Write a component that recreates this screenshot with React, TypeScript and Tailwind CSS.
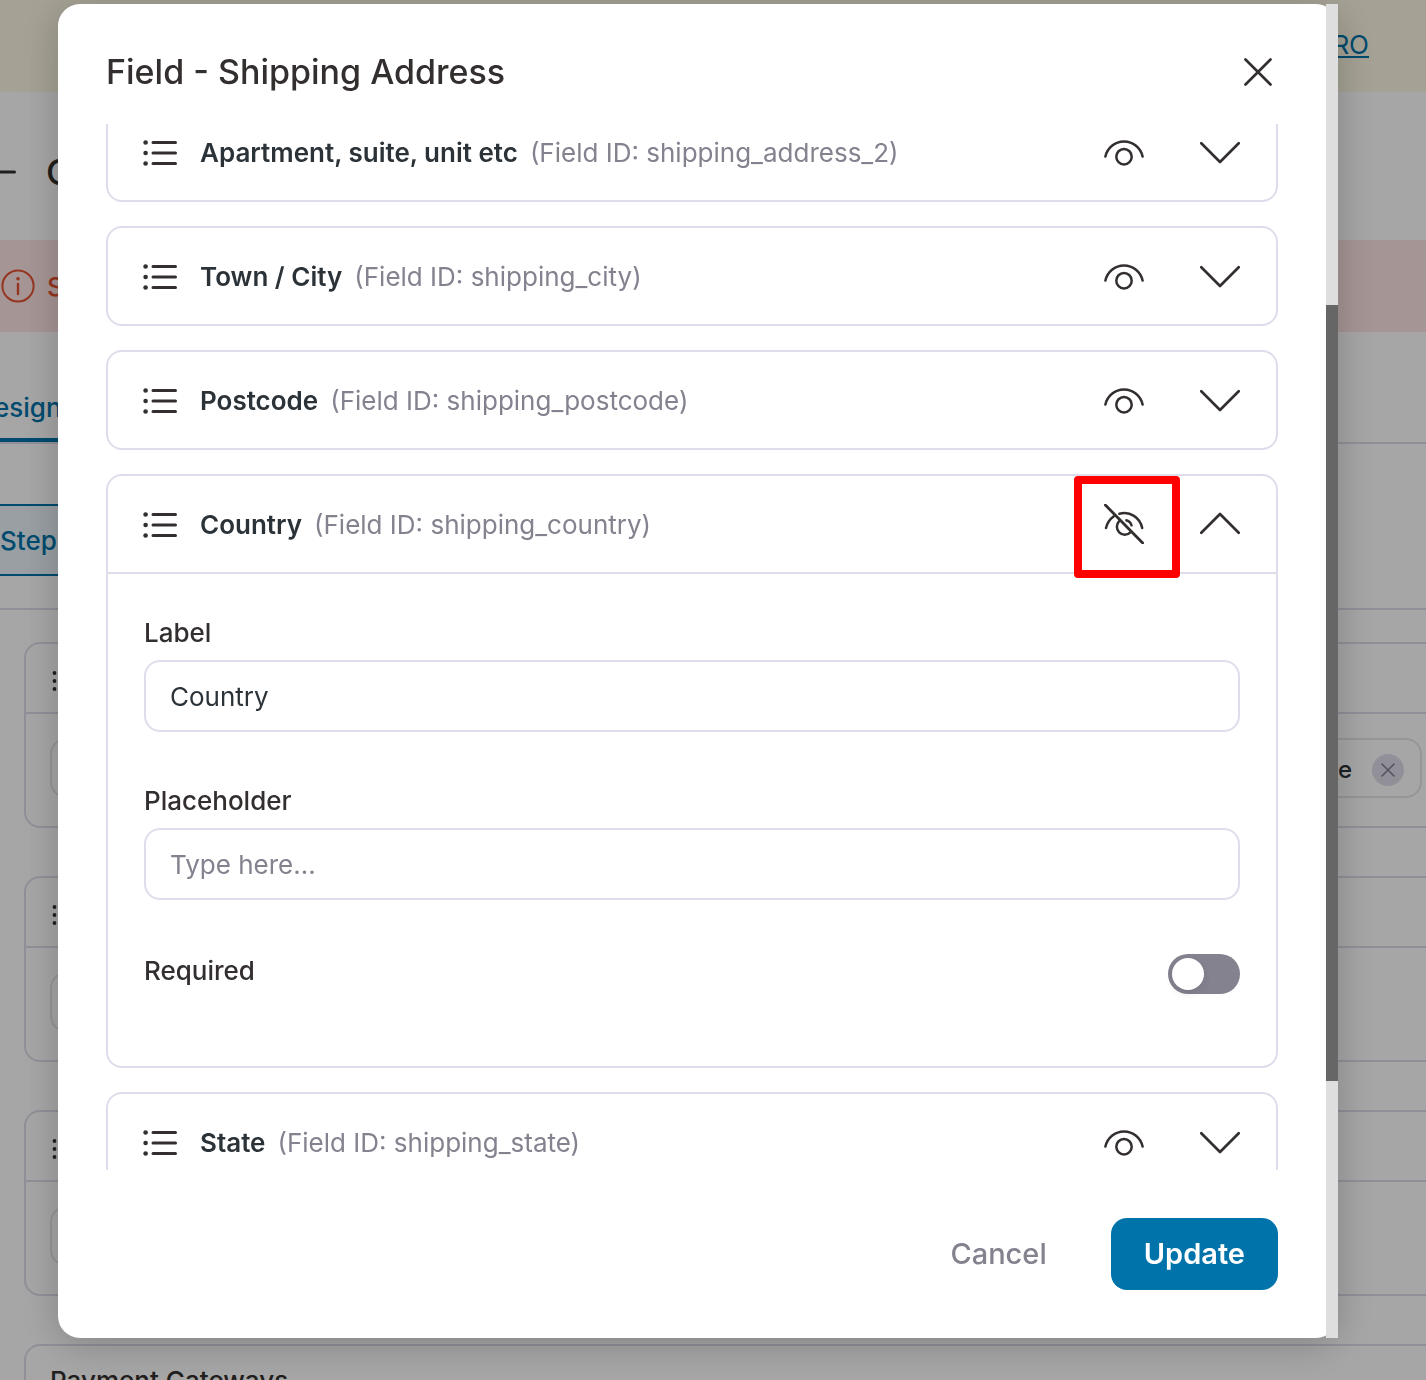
import { useLayoutEffect, useRef, useState } from "react";

type Field = { name: string; id: string; hidden?: boolean; open?: boolean };

const fields: Field[] = [
  { name: "Apartment, suite, unit etc", id: "shipping_address_2" },
  { name: "Town / City", id: "shipping_city" },
  { name: "Postcode", id: "shipping_postcode" },
  { name: "Country", id: "shipping_country", hidden: true, open: true },
  { name: "State", id: "shipping_state" },
];

function ListIcon() {
  return (
    <svg width="36" height="36" viewBox="0 0 36 36" fill="none" stroke="#332f2e" strokeWidth="3" strokeLinecap="round" className="shrink-0" aria-hidden="true">
      <path d="M11 8.5h22.5M11 19h22.5M11 29.5h22.5" />
      <g fill="#332f2e" stroke="none">
        <circle cx="3.6" cy="8.5" r="2.3" />
        <circle cx="3.6" cy="19" r="2.3" />
        <circle cx="3.6" cy="29.5" r="2.3" />
      </g>
    </svg>
  );
}

function EyeIcon({ off }: { off?: boolean }) {
  return (
    <svg width="40" height="40" viewBox="0 0 40 40" fill="none" stroke="#332f2e" strokeWidth="2.5" strokeLinecap="round" aria-hidden="true">
      {off ? (
        <>
          <path d="M1.3 1L38.7 39" strokeWidth="2.8" />
          <path d="M2 24C3.2 18.8 6 15 9.8 12.2" />
          <path d="M15.4 9.8C26 6.8 36 13.5 38.2 24" />
          <path d="M15.2 17.2A7.8 7.8 0 1 0 26.4 28.4" />
          <path d="M21.4 15.9A7.8 7.8 0 0 1 27.8 22.4" strokeLinecap="butt" />
        </>
      ) : (
        <>
          <path d="M1.4 24.6A19 19 0 0 1 38.6 24.6" />
          <circle cx="20" cy="24.7" r="7.7" />
        </>
      )}
    </svg>
  );
}

function Chevron({ up }: { up?: boolean }) {
  return (
    <svg width="40" height="40" viewBox="0 0 40 40" fill="none" stroke="#332f2e" strokeWidth="2.7" strokeLinecap="round" strokeLinejoin="round" aria-hidden="true">
      <path d={up ? "M1.3 28.8L20 10L38.7 28.8" : "M1.3 11.3L20 30L38.7 11.3"} />
    </svg>
  );
}

function FieldSettings() {
  const [label, setLabel] = useState("Country");
  const inputClass =
    "h-[72px] w-full rounded-2xl border-2 border-[#dfddeb] bg-white px-6 text-[26px] font-normal text-[#2c3338] outline-none placeholder:text-[#83828e] placeholder:opacity-100";
  return (
    <div className="flex flex-col gap-[54px] border-t-2 border-[#dfddeb] px-9 pt-11 pb-[72px] text-[26px] font-medium text-[#332f2e]">
      <div className="flex flex-col gap-3">
        <label htmlFor="field-label" className="leading-[30px]">Label</label>
        <input id="field-label" className={inputClass} value={label} onChange={(e) => setLabel(e.target.value)} />
      </div>
      <div className="flex flex-col gap-3">
        <label htmlFor="field-placeholder" className="leading-[30px]">Placeholder</label>
        <input id="field-placeholder" className={inputClass} placeholder="Type here..." />
      </div>
      <div className="flex items-start justify-between">
        <label htmlFor="field-required" className="leading-[34px]">Required</label>
        <input
          id="field-required"
          type="checkbox"
          role="switch"
          className="h-10 w-[72px] cursor-pointer appearance-none rounded-full bg-[#83828e] p-1 before:block before:size-8 before:rounded-full before:bg-white before:shadow-[0_4px_8px_rgba(0,0,0,0.08)] before:content-[''] checked:bg-[#0073aa] checked:before:ml-8"
        />
      </div>
    </div>
  );
}

function FieldCard({ field }: { field: Field }) {
  return (
    <section className="shrink-0 rounded-2xl border-2 border-[#dfddeb]">
      <div className="flex h-24 items-center pr-9 pl-[34px]">
        <ListIcon />
        <h3 className="ml-[22px] flex-1 pt-0.5 text-[26px] leading-8 font-semibold text-[#2c3338]">
          {field.name}
          <span className="ml-3 font-normal text-[#83828e]">(Field ID: {field.id})</span>
        </h3>
        <div className="flex gap-14">
          <button type="button" aria-label={field.hidden ? "Show field" : "Hide field"} className="relative size-10">
            <EyeIcon off={field.hidden} />
            {field.hidden && <span className="absolute -top-7 -right-9 -bottom-[34px] -left-[30px] rounded-sm border-8 border-[#ff0000]" />}
          </button>
          <button type="button" aria-label={field.open ? "Collapse" : "Expand"} className="size-10">
            <Chevron up={field.open} />
          </button>
        </div>
      </div>
      {field.open && <FieldSettings />}
    </section>
  );
}

function StepCard({ last }: { last?: boolean }) {
  return (
    <div className="-mr-5 h-[186px] shrink-0 rounded-2xl border-2 border-[#dfddeb]">
      <div className="flex h-[70px] items-center border-b-2 border-[#dfddeb] px-6 pt-1.5">
        <svg width="24" height="24" viewBox="0 0 24 24" fill="#332f2e" aria-hidden="true">
          {[4, 12, 20].map((y) => (
            <circle key={y} cx="4.5" cy={y} r="1.9" />
          ))}
        </svg>
      </div>
      <div className="flex justify-between py-6 pr-[22px] pl-6">
        <div className="h-[60px] w-40 rounded-2xl border-2 border-[#e6e6e6]" />
        {last && (
          <div className="flex h-[60px] w-60 items-center justify-end gap-5 rounded-2xl border-2 border-[#e6e6e6] pt-1 pr-4 text-[24px] font-medium text-[#2c3338]">
            <span className="leading-8">e</span>
            <button type="button" aria-label="Remove" className="grid size-8 place-items-center rounded-full bg-[#dfddeb]">
              <svg width="14" height="14" viewBox="0 0 14 14" stroke="#83828e" strokeWidth="1.6" strokeLinecap="round" aria-hidden="true">
                <path d="M1 1l12 12M13 1L1 13" />
              </svg>
            </button>
          </div>
        )}
      </div>
    </div>
  );
}

function BuilderPage() {
  return (
    <div className="flex h-full flex-col" aria-hidden="true">
      <div className="flex h-[92px] shrink-0 items-center justify-end bg-[#fef8e4] pr-[57px] pb-1 text-[26px]">
        <a href="#pro" className="text-[#0073aa] underline decoration-2 underline-offset-2">RO</a>
      </div>
      <div className="flex h-[148px] shrink-0 items-center gap-[30px] pt-3 text-[36px] font-medium text-[#332f2e]">
        <svg width="16" height="16" viewBox="0 0 16 16" stroke="#332f2e" strokeWidth="3" strokeLinecap="round">
          <path d="M-4 8H14.5" />
        </svg>
        <span>C</span>
      </div>
      <div className="flex h-[92px] shrink-0 items-center gap-3 bg-[#ffe5e5] pl-px text-[26px] font-medium text-[#e65230]">
        <svg width="34" height="34" viewBox="0 0 34 34" fill="none" stroke="#e65230" strokeWidth="2" strokeLinecap="round">
          <circle cx="17" cy="17" r="15.6" />
          <path d="M17 15v10" strokeWidth="2.4" />
          <circle cx="17" cy="9.8" r="0.8" fill="#e65230" />
        </svg>
        <span>S</span>
      </div>
      <div className="flex h-28 shrink-0 items-end border-b-2 border-[#dfddeb] text-[26px] font-medium text-[#0073aa]">
        <span className="-ml-1.5 flex h-[66px] items-start border-b-4 border-[#0073aa] pt-4 leading-8">esign</span>
      </div>
      <div className="flex h-[166px] shrink-0 items-start border-b-2 border-[#dfddeb] pt-[60px] text-[26px] font-medium text-[#0073aa]">
        <span className="flex h-[72px] items-center border-y-2 border-[#0073aa] bg-[#ebf5fa] pr-4">Step</span>
      </div>
      <div className="flex flex-col gap-12 pt-8 pl-6">
        <StepCard last />
        <StepCard />
        <StepCard />
        <div className="-mr-5 h-[186px] shrink-0 rounded-2xl border-2 border-[#dfddeb]">
          <div className="flex h-[70px] items-center border-b-2 border-[#dfddeb] px-6 text-[26px] font-medium text-[#332f2e]">Payment Gateways</div>
        </div>
      </div>
    </div>
  );
}

export default function App() {
  const listRef = useRef<HTMLDivElement>(null);
  useLayoutEffect(() => {
    if (listRef.current) listRef.current.scrollTop = 22;
  }, []);

  return (
    <main className="relative h-screen overflow-hidden bg-white font-['Inter',sans-serif]">
      <BuilderPage />
      <div className="fixed inset-0 flex bg-black/35 pt-1 pr-[88px] pb-[42px] pl-[58px]">
        <div role="dialog" aria-labelledby="dialog-title" className="flex min-w-0 flex-1 rounded-[22px] bg-white shadow-[0_6px_40px_rgba(0,0,0,0.22)]">
          <div className="flex min-w-0 flex-1 flex-col px-12">
            <header className="flex h-[120px] shrink-0 items-center justify-between pt-4">
              <h2 id="dialog-title" className="text-[34px] leading-[44px] font-medium text-[#332f2e]">Field - Shipping Address</h2>
              <button type="button" aria-label="Close" className="grid size-10 place-items-center">
                <svg width="40" height="40" viewBox="0 0 40 40" stroke="#332f2e" strokeWidth="2.7" strokeLinecap="round" aria-hidden="true">
                  <path d="M7.5 7.5l25 25M32.5 7.5l-25 25" />
                </svg>
              </button>
            </header>
            <div ref={listRef} className="flex min-h-0 flex-1 flex-col gap-6 overflow-y-auto [scrollbar-width:none]">
              {fields.map((field) => (
                <FieldCard key={field.id} field={field} />
              ))}
            </div>
            <footer className="flex shrink-0 justify-end gap-8 py-12 text-[29px] leading-10">
              <button type="button" className="h-[72px] px-8 font-medium text-[#83828e]">Cancel</button>
              <button type="button" className="h-[72px] rounded-2xl bg-[#0073aa] px-[33px] font-semibold text-white">Update</button>
            </footer>
          </div>
          <div className="flex w-3 shrink-0 flex-col bg-[#dedede]">
            <div className="flex-[301]" />
            <div className="flex-[776] bg-[#666666]" />
            <div className="flex-[257]" />
          </div>
        </div>
      </div>
    </main>
  );
}
